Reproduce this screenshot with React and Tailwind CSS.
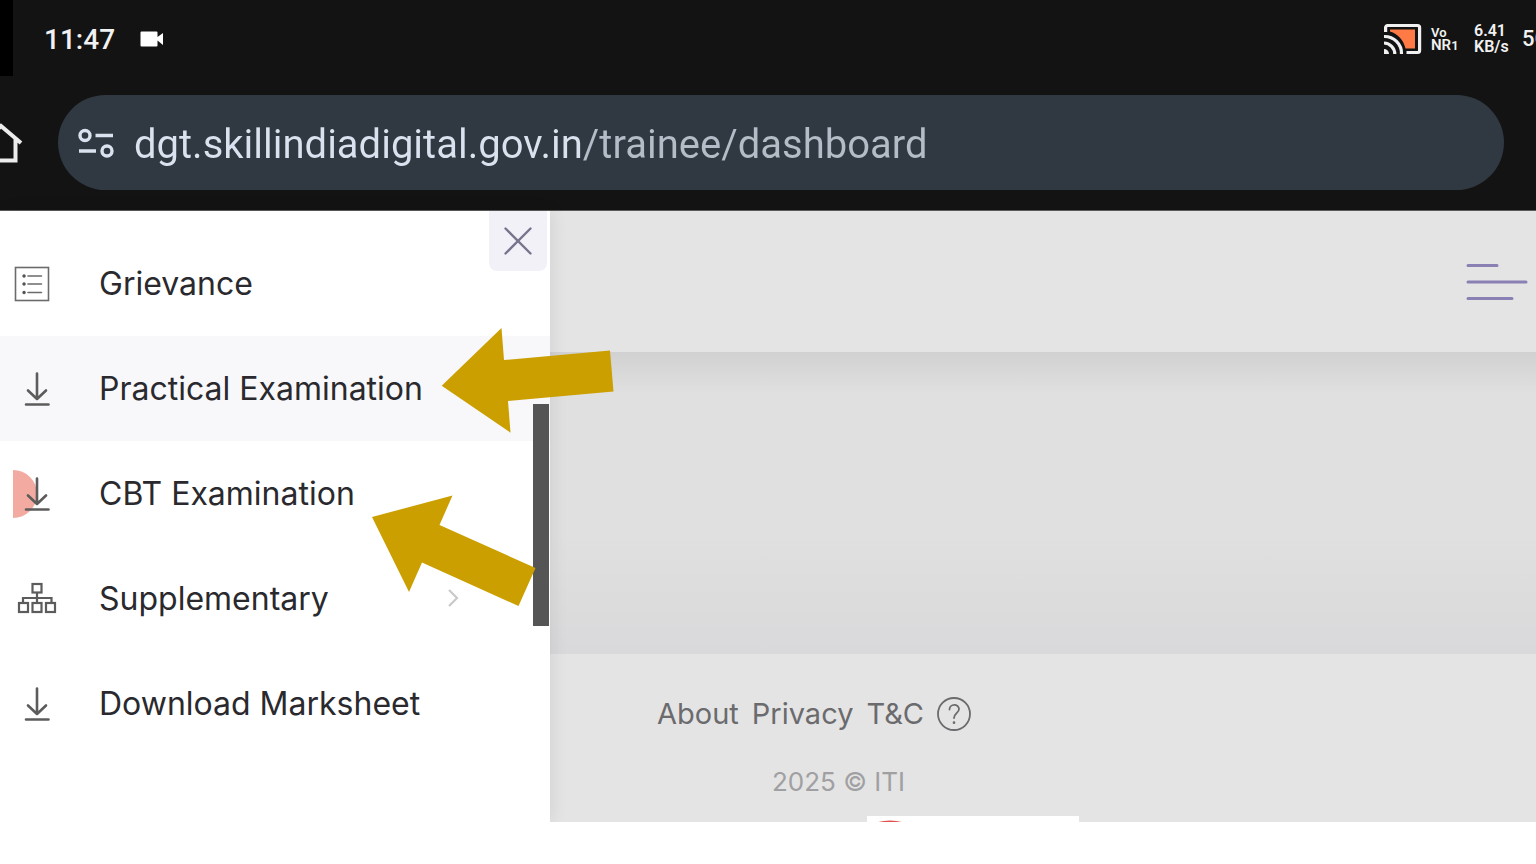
const MENU = [
  { label: 'Grievance', icon: ListIcon },
  { label: 'Practical Examination', icon: DownloadIcon, active: true },
  { label: 'CBT Examination', icon: DownloadIcon, touched: true },
  { label: 'Supplementary', icon: TreeIcon, expandable: true },
  { label: 'Download Marksheet', icon: DownloadIcon },
];

function ListIcon() {
  return (
    <svg className="w-11 h-11" viewBox="0 0 44 44" fill="none" stroke="#6b6b6b">
      <rect x="5.5" y="5.5" width="33" height="33" strokeWidth="1.6" />
      <path d="M18 14h13.5M18 22h13.5M18 30.5h13.5" strokeWidth="1.6" strokeLinecap="round" />
      <path d="M14 14h.1M14 22h.1M14 30.5h.1" stroke="#555" strokeWidth="3.4" strokeLinecap="round" />
    </svg>
  );
}

function DownloadIcon() {
  return (
    <svg className="relative w-11 h-11" viewBox="0 0 44 44" fill="none" stroke="#5c5c5c" strokeWidth="2.6" strokeLinecap="round" strokeLinejoin="round">
      <path d="M27 6.5v25M18 23.5l9 8.5 9-8.5M16 37.5h22.5" />
    </svg>
  );
}

function TreeIcon() {
  return (
    <svg className="w-12 h-11" viewBox="0 0 48 44" fill="none" stroke="#5c5c5c" strokeWidth="2.2">
      <rect x="22.5" y="7" width="9" height="8.5" />
      <path d="M27 15.5V26M13 26v-5h28.5v5" />
      <rect x="9" y="26" width="9" height="9" />
      <rect x="22.5" y="26" width="9" height="9" />
      <rect x="36" y="26" width="9" height="9" />
    </svg>
  );
}

function CastIcon() {
  return (
    <svg className="w-10 h-8" viewBox="0 0 40 32" fill="none" stroke="#f1f1f1" strokeWidth="3.2">
      <path d="M7 6.5h25v19h-9.5C20.5 17 15 11 7 8.5z" fill="#ff7a45" stroke="none" />
      <path d="M2.6 9V4.5a2 2 0 0 1 2-2h30a2 2 0 0 1 2 2v23a2 2 0 0 1-2 2H23.5" />
      <path d="M1 13.5A17 17 0 0 1 18.5 31M1 20A11 11 0 0 1 11.8 31" />
      <path d="M1 26a5 5 0 0 1 5 5H1z" fill="#f1f1f1" stroke="none" />
    </svg>
  );
}

function StatusBar() {
  return (
    <div className="flex h-[76px] text-[#f1f1f1]">
      <div className="w-[13px] shrink-0 bg-black" />
      <div className="flex flex-1 items-center pl-[31px] pt-1">
        <span className="w-24 text-[28px] font-medium leading-8">11:47</span>
        <svg className="w-6 h-5" viewBox="0 0 24 20" fill="#fff">
          <path d="M1.5 1.5h15a1 1 0 0 1 1 1V7L23 3v12l-5.5-4.5v5a1 1 0 0 1-1 1h-15a1 1 0 0 1-1-1v-13a1 1 0 0 1 1-1z" />
        </svg>
      </div>
      <div className="flex items-center pt-px">
        <CastIcon />
        <div className="ml-2 w-[43px] text-[15px] font-semibold leading-[13px]">
          <div className="text-[13px]">Vo</div>
          <div>NR<span className="text-[13px]">1</span></div>
        </div>
        <div className="w-12 text-base font-semibold leading-4">
          <div>6.41</div>
          <div>KB/s</div>
        </div>
        <div className="w-[14px] overflow-hidden text-[22px] font-medium">5G</div>
      </div>
    </div>
  );
}

function AddressBar() {
  return (
    <div className="flex items-center pr-8 pt-[19px] pb-5">
      <button aria-label="Home" className="w-[58px] shrink-0">
        <svg className="w-6 h-12" viewBox="0 0 24 48" fill="none" stroke="#ececec" strokeWidth="4">
          <path d="M-14 22L1 7l20 17M15.5 20v21.5H-8" />
        </svg>
      </button>
      <div className="flex h-[95px] flex-1 items-center rounded-full bg-[#303841] pl-5">
        <svg className="w-9 h-9 shrink-0" viewBox="0 0 36 36" fill="none" stroke="#d9e2ee" strokeWidth="3.4">
          <circle cx="7" cy="10.500" r="5" />
          <path d="M17.5 10.5H35M1 26h17" />
          <circle cx="29" cy="26" r="5" />
        </svg>
        {/* host is brighter than the path */}
        <input
          aria-label="Address"
          readOnly
          value="dgt.skillindiadigital.gov.in/trainee/dashboard"
          className="ml-5 w-full flex-1 bg-[linear-gradient(90deg,#d9e2ee_448px,#b3bcc7_448px)] bg-clip-text pt-1 text-[40px] leading-[50px] text-transparent outline-none"
        />
      </div>
    </div>
  );
}

function Sidebar() {
  return (
    <aside className="relative w-[550px] shrink-0 bg-white pt-5 pb-[66px] shadow-[2px_0_16px_rgba(0,0,0,0.08)]">
      <button
        aria-label="Close menu"
        className="absolute right-[3px] top-0 flex h-15 w-[58px] items-center justify-center rounded-b-lg bg-[#f2f1f8]"
      >
        <svg className="w-7 h-7" viewBox="0 0 28 28" stroke="#77748c" strokeWidth="2.4" strokeLinecap="round">
          <path d="M1.5 1.5l25 25M26.5 1.5l-25 25" />
        </svg>
      </button>
      <nav>
        {MENU.map(({ label, icon: Icon, active, touched, expandable }) => (
          <a
            key={label}
            href="#"
            className={`relative flex h-[105px] items-center pl-[10px] text-[#2a2a2e] ${active ? 'bg-[#f8f8fb]' : ''}`}
          >
            {touched && <span className="absolute left-[13px] h-12 w-6 rounded-r-full bg-[#f3aaa0]" />}
            <span className="w-[89px]"><Icon /></span>
            <span className="w-[346px] pt-px text-[32px] leading-10">{label}</span>
            {expandable && (
              <svg className="w-4 h-5" viewBox="0 0 16 20" fill="none" stroke="#c9c9c9" strokeWidth="2.2">
                <path d="M4 1l8 8-8 8" />
              </svg>
            )}
          </a>
        ))}
      </nav>
      <div className="absolute right-px top-[193px] h-[222px] w-4 bg-[#555]" />
    </aside>
  );
}

function Content() {
  return (
    <main className="flex flex-1 flex-col bg-[#e4e4e4]">
      <div className="flex h-[141px] items-center justify-end pr-2">
        <button aria-label="Open menu">
          <svg className="w-[62px] h-10" viewBox="0 0 62 40" stroke="#8a80b4" strokeWidth="3" strokeLinecap="round">
            <path d="M2 3.5h29M2 20h58M2 36.5h44" />
          </svg>
        </button>
      </div>
      <div className="flex-1 bg-[linear-gradient(#d1d1d1,#e0e0e0_14%,#e0e0e0_60%,#d9d9db)]" />
      <footer className="flex flex-col pl-[107px] pt-10 text-[#6b6b6e]">
        <div className="flex items-center gap-[13px] text-[29px] leading-10">
          <a href="#">About</a>
          <a href="#">Privacy</a>
          <a href="#">T&amp;C</a>
          <a href="#" aria-label="Help">
            <svg className="w-9 h-9" viewBox="0 0 36 36" fill="none" stroke="#6b6b6e" strokeWidth="1.8" strokeLinecap="round">
              <circle cx="17" cy="18" r="16" />
              <path d="M12.5 13.5c0-6 9.5-6 9.5-.5 0 4-5 4.5-5 9" />
              <path d="M17 26.5v.2" strokeWidth="2.6" />
            </svg>
          </a>
        </div>
        <p className="mt-7 pl-[115px] text-[26px] leading-10 text-[#a0a0a2]">2025 © ITI</p>
        <div className="mt-[14px] ml-[210px] h-[6px] w-[212px] overflow-hidden bg-white pl-2">
          <svg className="w-8 h-[6px]" viewBox="0 0 32 6" fill="#e0544e">
            <ellipse cx="15" cy="10" rx="17" ry="5.5" />
          </svg>
        </div>
      </footer>
    </main>
  );
}

export default function App() {
  return (
    <div className="relative overflow-hidden bg-white font-['Inter','Liberation_Sans',sans-serif]">
      <header className="border-b border-[#5a5a5a] bg-[#131313] font-['Roboto','Liberation_Sans',sans-serif]">
        <StatusBar />
        <AddressBar />
      </header>
      <div className="flex">
        <Sidebar />
        <Content />
      </div>

      {/* Pointers drawn over the menu */}
      <svg className="pointer-events-none absolute left-[372px] top-[328px] h-[280px] w-[242px]" viewBox="372 328 242 280" fill="#cb9f00">
        <path d="M441.7 385.7L501.5 328l2.5 32 106-9.5 3.5 41L508 401l2.5 31.7z" />
        <path d="M372 517l80.5-21.5-13 29.5 96 43-17 38-96.5-43.5L409 592z" />
      </svg>
    </div>
  );
}
